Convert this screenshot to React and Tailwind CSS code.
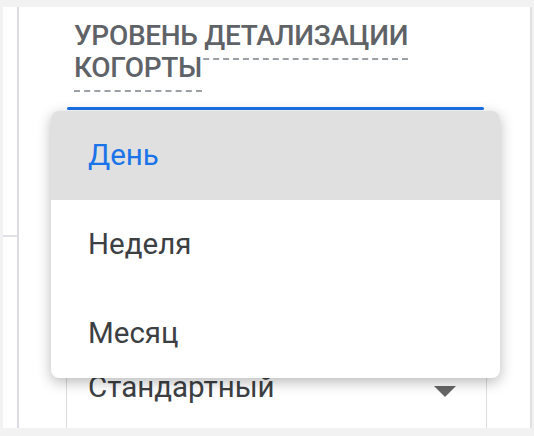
export default function App() {
  const options = [
    { label: 'День', active: true },
    { label: 'Неделя' },
    { label: 'Месяц' },
  ];

  return (
    <div className="relative w-[534px] h-[436px] overflow-hidden bg-[#f2f2f2] pt-[7px] pl-[3px] font-['Roboto',sans-serif]">
      <div className="flex w-[529px] h-[421px] bg-white border-r-2 border-[#e0e0e3]">
        {/* narrow left column */}
        <div className="w-[14px] shrink-0">
          <div className="h-[228px]" />
          <div className="h-[2px] bg-[#e0e0e6]" />
        </div>
        <div className="w-[2px] shrink-0 bg-[#dcdce4]" />

        {/* form column */}
        <div className="flex flex-col flex-1">
          <div className="ml-[55px] mt-[13px] w-[360px] text-[28px] leading-[32px] font-medium text-[#5f6368] uppercase tracking-[-0.3px]">
            <span className="bg-white border-b-2 border-dashed border-[#9aa0a6] pb-[6px]">
              Уровень детализации когорты
            </span>
          </div>

          <div className="ml-[48px] mt-[23px] w-[417px] h-[3px] rounded-full bg-[#1a73e8]" />

          <div className="ml-[47px] mt-[200px] w-[421px] flex-1 border-x border-[#dadce0] flex items-end">
            <div className="flex items-end justify-between w-full pl-[21px] pr-[30px] pb-[25px]">
              <span className="text-[29.5px] leading-[32px] text-[#3c4043]">Стандартный</span>
              <svg width="22" height="11" viewBox="0 0 22 11" className="mb-[6px]">
                <path d="M0 0h22L11 11z" fill="#666" />
              </svg>
            </div>
          </div>
        </div>
      </div>

      {/* open select menu */}
      <div className="absolute left-[51px] top-[111px] w-[449px] rounded-lg bg-white overflow-hidden shadow-[0_4px_14px_rgba(0,0,0,0.28)]">
        {options.map((o) => (
          <div
            key={o.label}
            className={`h-[89px] flex items-center pl-[37px] text-[29.5px] ${
              o.active ? 'bg-[#e0e0e0] text-[#1a73e8]' : 'text-[#3c4043]'
            }`}
          >
            {o.label}
          </div>
        ))}
      </div>
    </div>
  );
}
